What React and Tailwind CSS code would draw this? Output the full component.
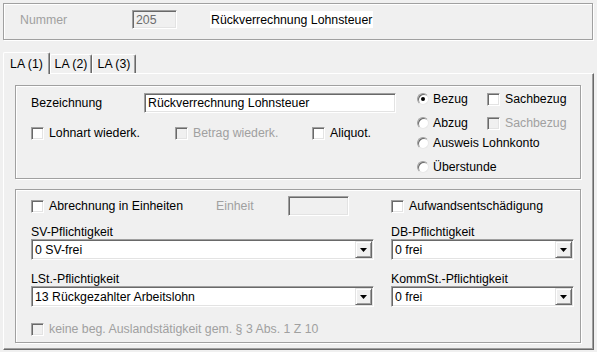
import React from "react";

const SUNKEN =
  "border border-t-[#a0a0a0] border-l-[#a0a0a0] border-b-white border-r-white shadow-[inset_1px_1px_0_#696969,inset_-1px_-1px_0_#e3e3e3]";
const ETCHED = "border border-[#a0a0a0] shadow-[1px_1px_0_#fff,inset_1px_1px_0_#fff]";

function Check({ disabled }) {
  return (
    <span
      className={`inline-block w-[13px] h-[13px] shrink-0 ${SUNKEN} ${
        disabled ? "bg-[#f0f0f0]" : "bg-white"
      }`}
    />
  );
}

function CheckItem({ label, disabled, className = "" }) {
  return (
    <div className={`flex items-center h-[14px] ${className}`}>
      <Check disabled={disabled} />
      <span className={`ml-[5px] whitespace-nowrap ${disabled ? "text-[#a0a0a0]" : ""}`}>{label}</span>
    </div>
  );
}

function Radio({ checked }) {
  return (
    <span className="relative inline-flex items-center justify-center w-[12px] h-[12px] shrink-0 rounded-full bg-white border border-t-[#a0a0a0] border-l-[#a0a0a0] border-b-[#e8e8e8] border-r-[#e8e8e8] shadow-[inset_1px_1px_0_#696969]">
      {checked && <span className="w-[4px] h-[4px] rounded-full bg-black" />}
    </span>
  );
}

function RadioItem({ label, checked, className = "" }) {
  return (
    <div className={`flex items-center h-[16px] ${className}`}>
      <Radio checked={checked} />
      <span className="ml-[4px] whitespace-nowrap">{label}</span>
    </div>
  );
}

function Combo({ value }) {
  return (
    <div className={`flex items-center w-full h-[21px] bg-white ${SUNKEN}`}>
      <span className="flex-1 pl-[3px] whitespace-nowrap">{value}</span>
      <span className="flex items-center justify-center w-[17px] h-[17px] mr-[1px] bg-[#f0f0f0] border border-t-[#e3e3e3] border-l-[#e3e3e3] border-r-[#696969] border-b-[#696969] shadow-[inset_1px_1px_0_#fff,inset_-1px_-1px_0_#a0a0a0]">
        <svg width="7" height="4" viewBox="0 0 7 4">
          <path d="M0 0h7L3.5 4z" fill="#000" />
        </svg>
      </span>
    </div>
  );
}

export default function App() {
  return (
    <div className="w-[597px] h-[352px] bg-[#f0f0f0] pt-[3px] pl-[3px] text-black font-['Liberation_Sans',Arial,sans-serif] text-[12.3px] leading-[14px] overflow-hidden">
      {/* Top box */}
      <div className={`w-[590px] h-[37px] flex items-start ${ETCHED}`}>
        <span className="ml-[16px] mt-[9px] w-[112px] text-[#a0a0a0]">Nummer</span>
        <div className={`mt-[6px] w-[45px] h-[19px] flex items-center pl-[3px] bg-[#f0f0f0] text-[#6d6d6d] ${SUNKEN}`}>
          205
        </div>
        <div className="ml-[33px] mt-[7px] w-[163px] h-[17px] bg-white flex items-center pl-[1px] whitespace-nowrap">
          Rückverrechnung Lohnsteuer
        </div>
      </div>

      {/* Tabs */}
      <div className="mt-[12px] h-[21px] flex items-end">
        <div className="relative z-10 -mb-px h-[22px] w-[47px] flex items-center justify-center bg-[#f0f0f0] border-t border-l border-white border-r border-r-[#696969] rounded-tl-[2px] rounded-tr-[2px] shadow-[inset_-1px_0_0_#a0a0a0]">
          LA (1)
        </div>
        <div className="h-[19px] w-[42px] flex items-center justify-center border-t border-l border-white border-r border-r-[#696969] rounded-tl-[2px] rounded-tr-[2px] shadow-[inset_-1px_0_0_#a0a0a0]">
          LA (2)
        </div>
        <div className="h-[19px] w-[44px] flex items-center justify-center border-t border-l border-white border-r border-r-[#696969] rounded-tl-[2px] rounded-tr-[2px] shadow-[inset_-1px_0_0_#a0a0a0]">
          LA (3)
        </div>
      </div>

      {/* Panel */}
      <div className="w-[591px] h-[277px] border-l border-t border-white border-r border-b border-r-[#696969] border-b-[#696969] shadow-[inset_-1px_-1px_0_#a0a0a0] pt-[11px] pl-[11px]">
        {/* Group 1 */}
        <div className={`w-[566px] h-[94px] flex ${ETCHED}`}>
          <div className="w-[401px] pl-[15px] pt-[7px] flex flex-col">
            <div className="flex items-center h-[20px]">
              <span className="w-[113px]">Bezeichnung</span>
              <div className={`w-[252px] h-[20px] flex items-center pl-[3px] bg-white whitespace-nowrap ${SUNKEN}`}>
                Rückverrechnung Lohnsteuer
              </div>
            </div>
            <div className="mt-[13px] flex items-center">
              <CheckItem label="Lohnart wiederk." className="w-[144px]" />
              <CheckItem label="Betrag wiederk." disabled className="w-[137px]" />
              <CheckItem label="Aliquot." />
            </div>
          </div>
          <div className="flex flex-col pt-[5px]">
            <div className="flex items-center">
              <RadioItem label="Bezug" checked className="w-[70px]" />
              <CheckItem label="Sachbezug" />
            </div>
            <div className="mt-[8px] flex items-center">
              <RadioItem label="Abzug" className="w-[70px]" />
              <CheckItem label="Sachbezug" disabled />
            </div>
            <RadioItem label="Ausweis Lohnkonto" className="mt-[4px]" />
            <RadioItem label="Überstunde" className="mt-[8px]" />
          </div>
        </div>

        {/* Group 2 */}
        <div className={`mt-[10px] w-[566px] h-[154px] flex flex-col pl-[15px] pt-[6px] ${ETCHED}`}>
          <div className="flex items-center h-[20px]">
            <CheckItem label="Abrechnung in Einheiten" className="w-[185px]" />
            <span className="w-[72px] text-[#a0a0a0]">Einheit</span>
            <div className={`w-[61px] h-[20px] bg-[#f0f0f0] ${SUNKEN}`} />
            <CheckItem label="Aufwandsentschädigung" className="ml-[42px]" />
          </div>
          <div className="flex">
            <div className="w-[343px] flex flex-col">
              <span className="mt-[9px] h-[14px]">SV-Pflichtigkeit</span>
              <Combo value="0 SV-frei" />
              <span className="mt-[12px] h-[14px]">LSt.-Pflichtigkeit</span>
              <Combo value="13 Rückgezahlter Arbeitslohn" />
            </div>
            <div className="ml-[17px] w-[183px] flex flex-col">
              <span className="mt-[9px] h-[14px]">DB-Pflichtigkeit</span>
              <Combo value="0 frei" />
              <span className="mt-[12px] h-[14px]">KommSt.-Pflichtigkeit</span>
              <Combo value="0 frei" />
            </div>
          </div>
          <CheckItem
            label="keine beg. Auslandstätigkeit gem. § 3 Abs. 1 Z 10"
            disabled
            className="mt-[15px]"
          />
        </div>
      </div>
    </div>
  );
}
